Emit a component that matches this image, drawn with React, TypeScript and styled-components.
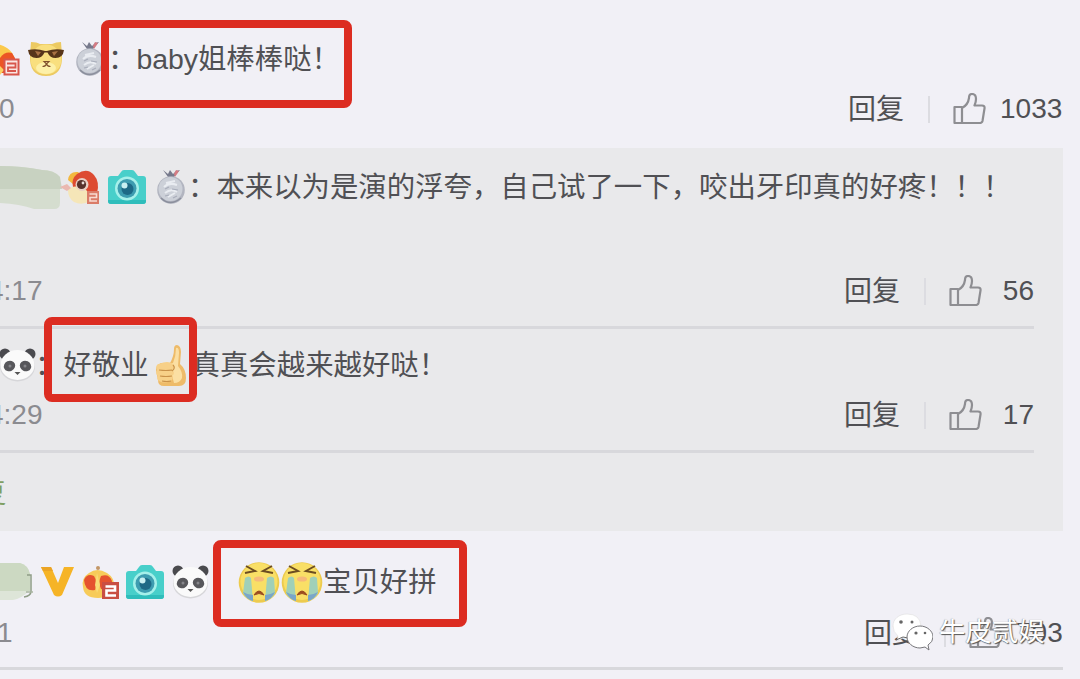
import React from "react";
import styled, { createGlobalStyle } from "styled-components";

const GlobalStyle = createGlobalStyle`
  * {
    box-sizing: border-box;
  }
  body {
    margin: 0;
    background: #f1f0f6;
    font-family: "Liberation Sans", "Noto Sans CJK SC", sans-serif;
    font-size: 28.4px;
    color: #505054;
    overflow: hidden;
  }
`;

const Page = styled.main`
  width: 1080px;
  height: 679px;
  overflow: hidden;
  background: #f1f0f6;
`;

const Comment = styled.article<{ $height: number; $top: number; $line?: boolean; $right?: number }>`
  height: ${(p) => p.$height}px;
  padding-top: ${(p) => p.$top}px;
  margin-right: ${(p) => p.$right || 0}px;
  border-bottom: ${(p) => (p.$line ? "3px solid #d8d8dc" : "none")};
`;

const Replies = styled.section`
  width: 1063px;
  height: 383px;
  background: #e9e9eb;
`;

const Line = styled.div<{ $gap?: number }>`
  position: relative;
  display: flex;
  align-items: center;
  height: 40px;
  margin-bottom: ${(p) => p.$gap || 0}px;
  white-space: nowrap;
`;

const Slot = styled.span<{ $w: number; $ml?: number }>`
  flex: none;
  display: flex;
  width: ${(p) => p.$w}px;
  margin-left: ${(p) => p.$ml || 0}px;

  svg {
    display: block;
    overflow: visible;
  }
`;

const Text = styled.span<{ $ml?: number }>`
  flex: none;
  line-height: 40px;
  margin-left: ${(p) => p.$ml || 0}px;
`;

const Meta = styled.div<{ $right: number }>`
  display: flex;
  align-items: center;
  justify-content: space-between;
  height: 40px;
  padding-right: ${(p) => p.$right}px;
  font-size: 28px;
`;

const Time = styled.span<{ $shift: number }>`
  color: #8b8b90;
  margin-left: ${(p) => p.$shift}px;
`;

const Actions = styled.div`
  position: relative;
  display: flex;
  align-items: center;
`;

const Reply = styled.span`
  line-height: 40px;
  padding-top: 2px;
`;

const Divider = styled.i`
  width: 2px;
  height: 27px;
  margin: 0 23px 0 24px;
  background: #dcdce1;
`;

const Count = styled.span<{ $w: number }>`
  width: ${(p) => p.$w}px;
  margin-left: 14px;
  text-align: right;
`;

const Mark = styled.div<{ $x: number; $y: number; $w: number; $h: number }>`
  position: absolute;
  left: ${(p) => p.$x}px;
  top: ${(p) => p.$y}px;
  width: ${(p) => p.$w}px;
  height: ${(p) => p.$h}px;
  border: 8px solid #dc2c21;
  border-radius: 8px;
`;

const More = styled.div`
  display: flex;
  height: 79px;
  padding-top: 20px;
  line-height: 40px;
  color: #7f9f62;
`;

const MoreText = styled.span`
  margin-left: -22px;
`;

const Watermark = styled.div`
  position: absolute;
  left: 28px;
  top: 0;
  display: flex;
  align-items: center;
  gap: 6px;
  font-size: 26.4px;
  line-height: 40px;
  color: #fff;
  white-space: nowrap;
  text-shadow: 1px 1px 1px #555, -0.5px -0.5px 1px #999;

  svg {
    display: block;
  }
`;

const Medal = () => (
  <svg width="30" height="34" viewBox="0 0 30 34">
    <path d="M7 0l5 7h6l6-7-4 1-3 3-3-4-2 4z" fill="#777a8c" />
    <path d="M18 4l2-4 3 1-4 6z" fill="#d57b83" />
    <circle cx="15" cy="20" r="13.8" fill="#b2b5c0" />
    <circle cx="14.500" cy="19" r="12" fill="#ccd0d8" />
    <path d="M8 17q5-5 13-2M9 23q6-5 12-1M12 27l7-4M10 13l9-2" stroke="#e9ecf1" strokeWidth="2" fill="none" />
    <path d="M9 19l4-2M16 19l6 1M9 26l4-1M17 28l4-2" stroke="#a9aebb" strokeWidth="1.200" fill="none" />
    <path d="M5 28q9 9 20 0" stroke="#8b8f9c" strokeWidth="1.500" fill="none" />
  </svg>
);

const Camera = () => (
  <svg width="40" height="35" viewBox="0 0 40 35">
    <path d="M4 6h7l3-4q1-2 3-2h8q2 0 3 2l3 4h5q3 0 3 3v22q0 3-3 3H4q-3 0-3-3V9q0-3 3-3z" fill="#48cfca" />
    <path d="M1 30h38v1q0 3-3 3H4q-3 0-3-3z" fill="#2fbdbb" />
    <circle cx="20" cy="18.500" r="12" fill="#a5f0ea" />
    <circle cx="20" cy="18.500" r="9.500" fill="#3d9cb0" />
    <circle cx="20.500" cy="19" r="6" fill="#1d6986" />
    <circle cx="17.500" cy="15.500" r="3" fill="#c8eff2" />
  </svg>
);

const Panda = () => (
  <svg width="37" height="34" viewBox="0 0 37 34">
    <circle cx="6" cy="6" r="5.500" fill="#4a4a4e" />
    <circle cx="31" cy="6" r="5.500" fill="#4a4a4e" />
    <ellipse cx="18.500" cy="18.500" rx="17.500" ry="15" fill="#d6d6d9" />
    <ellipse cx="18.500" cy="17" rx="17" ry="15" fill="#fafafa" />
    <ellipse cx="10.500" cy="18" rx="5.800" ry="5.200" fill="#57575b" transform="rotate(-25 10.500 18)" />
    <ellipse cx="26.500" cy="18" rx="5.800" ry="5.200" fill="#57575b" transform="rotate(25 26.500 18)" />
    <circle cx="11" cy="18" r="1.500" fill="#85858a" />
    <circle cx="26" cy="18" r="1.500" fill="#85858a" />
    <path d="M15.500 24h6l-3 3z" fill="#555" />
  </svg>
);

const Cat = () => (
  <svg width="36" height="36" viewBox="0 0 36 36">
    <path d="M3 1q6 0 9 2h12q4-2 9-2l1 13q1 21-16 21T2 14z" fill="#ecca62" />
    <ellipse cx="18" cy="18.500" rx="15.500" ry="15" fill="#f9df7e" />
    <ellipse cx="18" cy="27" rx="10" ry="6" fill="#fdf0a8" />
    <path d="M0 9q9-2 17 1h2q8-3 17-1-1 8-8.500 8-5.500 0-8-5.500h-3q-2.500 5.500-8 5.500Q1 17 0 9z" fill="#573519" />
    <path d="M7 10l6 1-3 4zM24 11l6-1-4 5z" fill="#a97143" />
    <path d="M16 20.500h5l-2.500 2.500zM14.500 25.500q3 0 4-2.500 1 2.500 4 2.500" stroke="#80502c" strokeWidth="1.200" fill="none" />
  </svg>
);

const Crown = () => (
  <svg width="39" height="35" viewBox="0 0 39 35">
    <circle cx="17" cy="3" r="2" fill="#c39767" />
    <path d="M8 8q8-6 18 0 8 5 7 14-2 11-16 11T2 22Q0 13 8 8z" fill="#f7cb59" />
    <path d="M3 15q3-7 10-4 4 6 1 14Q4 27 3 15zM20 11q8-3 11 5l-1 7q-6 3-10 1-3-7 0-13z" fill="#e5522e" />
    <path d="M16 8l3 12-3 8-2-8z" fill="#f9dc77" />
    <rect x="21" y="17" width="17" height="17" fill="#c94e42" />
    <path d="M24.500 21.500H34v4h-8.500v5H35" fill="none" stroke="#fff" strokeWidth="2.600" />
  </svg>
);

const CrownOutlined = () => (
  <svg width="39" height="36" viewBox="0 0 39 36">
    <path d="M8 6q8-6 18 1 8 5 7 14-2 11-16 11T2 22Q0 11 8 6z" fill="#fbc94c" />
    <path d="M19 17q5-7 12-5l3 5v15H19z" fill="#ec5524" />
    <path d="M19 25l4 4-4 5z" fill="#fbd062" />
    <rect x="23.500" y="18.500" width="14" height="15" fill="#fbe6e2" stroke="#d8564c" strokeWidth="2" />
    <path d="M26 22.500h8.500v4H27v3.500h8" fill="none" stroke="#d8564c" strokeWidth="1.800" />
  </svg>
);

const Bird = () => (
  <svg width="34" height="35" viewBox="0 0 34 35">
    <path d="M1 10Q2 1 11 2l9 8-9 8z" fill="#f3b83f" />
    <path d="M10 4Q20-3 27 5q6 7 3 18H18L6 17q-2-8 4-13z" fill="#dd4b32" />
    <path d="M1 20q4-5 12-3 9 1 10 14-8 5-16 1-6-4-6-12z" fill="#f5e6b8" />
    <circle cx="15" cy="14.500" r="6.500" fill="#e9cfc4" />
    <circle cx="14.500" cy="14.500" r="4.600" fill="#57322c" />
    <circle cx="16" cy="13" r="1.400" fill="#e9dcd8" />
    <path d="M0 14l-7 3 7 4 4-3z" fill="#eab8b0" />
    <rect x="20" y="21" width="12" height="13" fill="#da7c68" />
    <path d="M22.500 24h7v3.500H23V31h7" fill="none" stroke="#f8dcd2" strokeWidth="1.600" />
  </svg>
);

const Vip = () => (
  <svg width="33" height="30" viewBox="0 0 33 30">
    <path d="M0 0h10l7 16 6-16h10L21 28q-4 3-8 0z" fill="#f6b426" />
    <path d="M0 0h10l2 4H2z" fill="#eba424" />
  </svg>
);

const Cry = () => (
  <svg width="42" height="43" viewBox="0 0 42 43">
    <circle cx="21" cy="21.500" r="20.300" fill="#edcb4e" />
    <circle cx="21" cy="20.500" r="18.500" fill="#f9df66" />
    <path d="M7 17q4-3 6 0l2 23q-7-2-10-8z" fill="#a0d0b8" />
    <path d="M29 17q4-3 7 0l1 15q-3 6-10 8z" fill="#a0d0b8" />
    <path d="M5 31q5 3 10 3v6q-7-2-10-9zM37 31q-5 3-10 3v6q7-2 10-9z" fill="#7aa6c8" />
    <path d="M8 5l9 5-10 2M34 5l-9 5 10 2" fill="none" stroke="#6c4d22" strokeWidth="2" />
    <ellipse cx="21" cy="18" rx="5" ry="2.600" fill="#f6b97a" />
    <path d="M16 34q5-8 10 0-5-3-10 0z" fill="#9b4c20" stroke="#9b4c20" />
  </svg>
);

const ThumbEmoji = () => (
  <svg width="32" height="43" viewBox="0 0 32 43">
    <path d="M15 19q4-7 4-14 0-4 3-4 4 1 4 7l-1 12q6 5 6 14 0 8-7 8H9Q3 42 3 36L1 26q0-5 5-7z" fill="#eebb69" />
    <path d="M18 19q3-7 3-15 3-1 3 5l-1 13q5 6 4 12-2 5-8 5l-5-19z" fill="#fbdfa3" />
    <path d="M4 20q9-4 14 0 3 4-1 6 4 3 0 6 2 4-2 5-6 3-11 0-3-2-1-5-3-2-1-6-2-4 1-6z" fill="#f7d088" />
    <path d="M4 26q7 1 13 0M5 32q6 1 12 0M7 37q5 1 9 0M18 21q3 3-1 6" fill="none" stroke="#c9924a" strokeWidth="1.200" />
  </svg>
);

const LikeIcon = () => (
  <svg width="33" height="32" viewBox="0 0 33 32" fill="none" stroke="#8e8e92" strokeWidth="2.200" strokeLinejoin="round">
    <path d="M1.500 14H9v16H1.500zM9 15q6-3 7-10 0-4 3-4 4 0 4 5 0 3-1.500 6.500H29q3 0 2.500 3L29.500 28q-.5 2-3 2H9" />
  </svg>
);

const WeChat = () => (
  <svg width="41" height="38" viewBox="0 0 41 38">
    <path d="M15 1C7 1 1 6 1 13q0 6 5 10l-1 5 6-3q3 1 7 0 11-2 11-12Q28 1 15 1z" fill="#fff" stroke="#ddd" strokeWidth=".6" />
    <path d="M4 27l7-3 5 1" fill="none" stroke="#666" />
    <path d="M28 13c-7 0-13 5-13 11s6 11 13 11l5-1 4 3-1-5q5-3 5-8c0-6-6-11-13-11z" fill="#fff" stroke="#77777b" />
    <g fill="#666">
      <circle cx="9" cy="9" r="1.800" />
      <circle cx="20" cy="9" r="1.500" />
      <circle cx="24" cy="20" r="1.600" />
      <circle cx="33" cy="20" r="1.300" />
    </g>
  </svg>
);

const NameSmear = () => (
  <svg width="66" height="44" viewBox="0 0 66 44">
    <path d="M0 1q22 0 42 4 12 0 18 7v26q0 6-6 6H34Q20 39 0 38z" fill="#d5ddcf" />
    <path d="M0 1q22 0 42 4 12 0 18 7l2 12H0z" fill="#c8d2c1" />
  </svg>
);

const ShortSmear = () => (
  <svg width="36" height="38" viewBox="0 0 36 38">
    <path d="M0 0h20q8 2 10 11v16q-9 9-17 10H0z" fill="#dde5d8" />
    <path d="M0 0h20q8 2 10 11v17H0z" fill="#ccd9c2" />
    <path d="M27 12h4v16q0 5-7 6" fill="none" stroke="#8f9d86" strokeWidth="1.500" />
    <path d="M26 29h7" stroke="#a9b4a1" strokeWidth="1.500" />
  </svg>
);

interface FooterProps {
  time: string;
  shift: number;
  likes: string;
  right: number;
  countWidth: number;
  children?: React.ReactNode;
}

const Footer: React.FC<FooterProps> = ({ time, shift, likes, right, countWidth, children }) => (
  <Meta $right={right}>
    <Time $shift={shift}>{time}</Time>
    <Actions>
      <Reply>回复</Reply>
      <Divider />
      <LikeIcon />
      <Count $w={countWidth}>{likes}</Count>
      {children}
    </Actions>
  </Meta>
);

const App: React.FC = () => {
  return (
    <Page lang="zh-CN">
      <GlobalStyle />
      <Comment $height={148} $top={39}>
        <Line $gap={10}>
          <Slot $w={39} $ml={-19}><CrownOutlined /></Slot>
          <Slot $w={36} $ml={8}><Cat /></Slot>
          <Slot $w={30} $ml={11}><Medal /></Slot>
          <Text $ml={3}>：baby姐棒棒哒！</Text>
          <Mark $x={101} $y={-19} $w={251} $h={88} />
        </Line>
        <Footer time="0" shift={-1} likes="1033" right={18} countWidth={62} />
      </Comment>

      <Replies>
        <Comment $height={181} $top={19} $right={29} $line>
          <Line $gap={64}>
            <Slot $w={66}><NameSmear /></Slot>
            <Slot $w={34} $ml={1}><Bird /></Slot>
            <Slot $w={40} $ml={6}><Camera /></Slot>
            <Slot $w={30} $ml={9}><Medal /></Slot>
            <Text $ml={2}>：本来以为是演的浮夸，自己试了一下，咬出牙印真的好疼！！！</Text>
          </Line>
          <Footer time="4:17" shift={-12} likes="56" right={0} countWidth={38} />
        </Comment>
        <Comment $height={124} $top={16} $right={29} $line>
          <Line $gap={10}>
            <Slot $w={37} $ml={-1}><Panda /></Slot>
            <Text $ml={-1}>：好敬业</Text>
            <Slot $w={32} $ml={6}><ThumbEmoji /></Slot>
            <Text $ml={5}>真真会越来越好哒！</Text>
            <Mark $x={44} $y={-28} $w={153} $h={85} />
          </Line>
          <Footer time="4:29" shift={-12} likes="17" right={0} countWidth={38} />
        </Comment>
        <More><MoreText>复</MoreText></More>
      </Replies>

      <Comment $height={139} $top={31} $right={17} $line>
        <Line $gap={11}>
          <Slot $w={36}><ShortSmear /></Slot>
          <Slot $w={33} $ml={5}><Vip /></Slot>
          <Slot $w={39} $ml={7}><Crown /></Slot>
          <Slot $w={40} $ml={5}><Camera /></Slot>
          <Slot $w={37} $ml={7}><Panda /></Slot>
          <Slot $w={42} $ml={29}><Cry /></Slot>
          <Slot $w={42} $ml={1}><Cry /></Slot>
          <Text>宝贝好拼</Text>
          <Mark $x={213} $y={-22} $w={254} $h={87} />
        </Line>
        <Footer time="1" shift={-3} likes="703" right={1} countWidth={46}>
          <Watermark>
            <WeChat />
            <span>牛皮贰娱</span>
          </Watermark>
        </Footer>
      </Comment>
    </Page>
  );
};

export default App;
